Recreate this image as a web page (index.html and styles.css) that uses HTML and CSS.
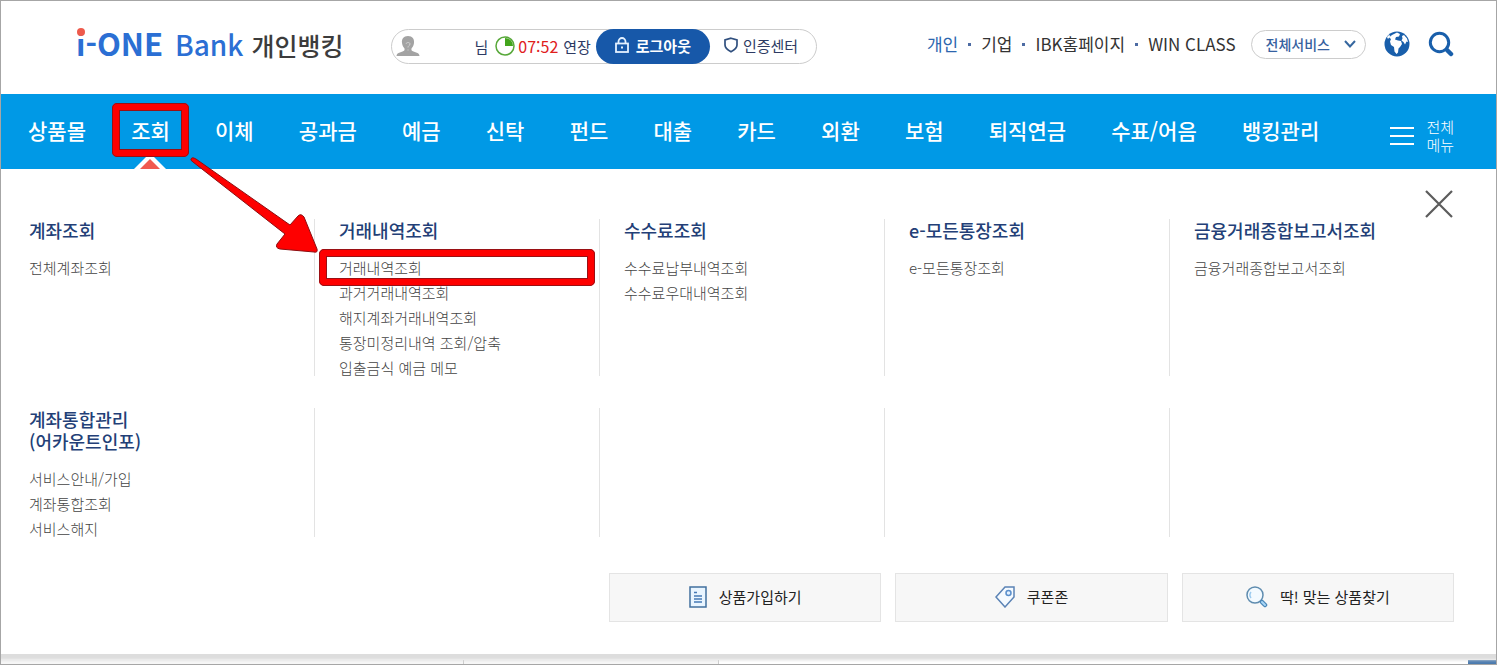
FILE: index.html
```html
<!DOCTYPE html>
<html lang="ko">
<head>
<meta charset="utf-8">
<meta name="viewport" content="width=device-width, initial-scale=1">
<title>i-ONE Bank 개인뱅킹</title>
<link rel="stylesheet" href="styles.css">
</head>
<body>
<div class="page">
  <header class="header">
    <a class="logo" href="#"><span class="logo-one">i-ONE</span><span class="logo-bank">Bank</span><span class="logo-sub">개인뱅킹</span></a>
    <div class="session">
      <svg class="avatar" viewBox="0 0 24 22" width="24" height="22" aria-hidden="true"><path fill="#a3a3a3" d="M12 1c4.500 0 6.500 3 6 7-.4 3-1.600 4.200-2.500 5.500-.4 1.500.3 2.500 2 3l4 1.500c1.300.6 1.800 1.600 2 3H.500c.2-1.400.7-2.400 2-3l4-1.500c1.700-.5 2.400-1.500 2-3C7.600 12.200 6.400 11 6 8c-.5-4 1.500-7 6-7z"/><path fill="none" stroke="#d2d2d2" d="M10 9c.4-2 4-2 4 0 0 1.600-2 1.500-2 3.500m0 2v1"/></svg>
      <span class="user-name">님</span>
      <svg class="timer" viewBox="0 0 20 20" width="20" height="20" aria-hidden="true"><circle cx="10" cy="10" r="9" fill="#fff" stroke="#58a83a" stroke-width="1.500"/><path fill="#43a51d" d="M10 2a8 8 0 0 1 8 8h-8z"/></svg>
      <span class="time">07:52</span>
      <a class="extend" href="#">연장</a>
      <button class="logout" type="button"><svg viewBox="0 0 14 16" width="14" height="16" aria-hidden="true"><g fill="none" stroke="#e4f1ff" stroke-width="1.800"><rect x="1" y="6.500" width="12" height="8.500"/><path d="M3.500 6.500V4.500a3.500 3.500 0 0 1 7 0v2"/></g><path fill="#e4f1ff" d="M6 9.500h2v2H6z"/></svg>로그아웃</button>
      <a class="cert" href="#"><svg viewBox="0 0 14 16" width="14" height="16" aria-hidden="true"><path fill="none" stroke="#31507f" stroke-width="1.700" d="M7 1.200 13 3v5c0 3-2.500 5-6 6.800C3.500 13 1 11 1 8V3z"/></svg>인증센터</a>
    </div>
    <nav class="sites" aria-label="사이트">
      <ul class="site-list">
        <li><a class="current" href="#">개인</a></li>
        <li><a href="#">기업</a></li>
        <li><a href="#">IBK홈페이지</a></li>
        <li><a href="#">WIN CLASS</a></li>
      </ul>
      <button class="services" type="button">전체서비스<svg viewBox="0 0 12 8" width="12" height="8" aria-hidden="true"><path fill="none" stroke="#36679f" stroke-width="2" d="m1 1 5 5.500L11 1"/></svg></button>
      <button class="icon-button" type="button" aria-label="언어"><svg viewBox="0 0 26 26" width="26" height="26" aria-hidden="true"><circle cx="13" cy="13" r="12.500" fill="#195fab"/><path fill="#fff" d="m8 4 5-2.500 3 1.500-1 2.500-3 .5-1 2.500 3 1 3 .5 1 3-2 3-1.500 1.500-.5 4-1.500 1.500-2-2.500-.5-4.500-3-2-1-3.500 1-2.500-2-1.500z"/><path fill="#fff" d="m18 5 2-1 3 3.500 1 3.500-1.500-.5-1.500 3-1.500-2.500-2-1.500 1-2z"/><path fill="#fff" d="m3 6 2-2 1.500 1L4 8z"/></svg></button>
      <button class="icon-button" type="button" aria-label="검색"><svg viewBox="0 0 26 26" width="26" height="26" aria-hidden="true"><circle cx="11.500" cy="11.500" r="9.200" fill="none" stroke="#195fab" stroke-width="3"/><path stroke="#195fab" stroke-width="4.500" stroke-linecap="round" d="m19.500 19.500 3.500 3.500"/></svg></button>
    </nav>
  </header>

  <nav class="gnb" aria-label="주 메뉴">
    <ul class="gnb-list">
      <li><a href="#">상품몰</a></li>
      <li class="active"><a href="#">조회</a>
        <svg class="caret" viewBox="0 0 32 16" width="32" height="16" aria-hidden="true"><path fill="#fff" d="M16 0 32 16H0z"/><path fill="#f05a4f" d="m16 6 10 10H6z"/></svg>
        <span class="mark mark-tab"></span>
        <svg class="arrow" viewBox="0 0 130 98" width="130" height="98" aria-hidden="true"><path fill="#fe0000" stroke="#8c0d10" stroke-linejoin="round" d="M2 3c1-2 3-1 5 0l94 66 8-9q3-3 6 1l13 32q1 4-3 3l-34-3q-5-1-3-5l8-10L4 6Q1 4 2 3z"/></svg>
      </li>
      <li><a href="#">이체</a></li>
      <li><a href="#">공과금</a></li>
      <li><a href="#">예금</a></li>
      <li><a href="#">신탁</a></li>
      <li><a href="#">펀드</a></li>
      <li><a href="#">대출</a></li>
      <li><a href="#">카드</a></li>
      <li><a href="#">외환</a></li>
      <li><a href="#">보험</a></li>
      <li><a href="#">퇴직연금</a></li>
      <li><a href="#">수표/어음</a></li>
      <li><a href="#">뱅킹관리</a></li>
    </ul>
    <button class="all-menu" type="button"><svg viewBox="0 0 24 20" width="24" height="20" aria-hidden="true"><path stroke="#fff" stroke-width="2" d="M0 2h24M0 10h24M0 18h24"/></svg><span>전체<br>메뉴</span></button>
  </nav>

  <section class="mega">
    <button class="close" type="button" aria-label="닫기"><svg viewBox="0 0 28 28" width="28" height="28" aria-hidden="true"><path stroke="#5c5c5c" stroke-width="2.200" d="m1 1 26 26M27 1 1 27"/></svg></button>
    <div class="columns">
      <div class="cell"><h2>계좌조회</h2><ul><li><a href="#">전체계좌조회</a></li></ul></div>
      <div class="cell"><h2>거래내역조회</h2><ul>
        <li class="picked"><a href="#">거래내역조회</a><span class="mark mark-link"></span></li>
        <li><a href="#">과거거래내역조회</a></li>
        <li><a href="#">해지계좌거래내역조회</a></li>
        <li><a href="#">통장미정리내역 조회/압축</a></li>
        <li><a href="#">입출금식 예금 메모</a></li></ul></div>
      <div class="cell"><h2>수수료조회</h2><ul><li><a href="#">수수료납부내역조회</a></li><li><a href="#">수수료우대내역조회</a></li></ul></div>
      <div class="cell"><h2>e-모든통장조회</h2><ul><li><a href="#">e-모든통장조회</a></li></ul></div>
      <div class="cell"><h2>금융거래종합보고서조회</h2><ul><li><a href="#">금융거래종합보고서조회</a></li></ul></div>
      <div class="cell"><h2>계좌통합관리<br>(어카운트인포)</h2><ul><li><a href="#">서비스안내/가입</a></li><li><a href="#">계좌통합조회</a></li><li><a href="#">서비스해지</a></li></ul></div>
      <div class="cell"></div>
      <div class="cell"></div>
      <div class="cell"></div>
      <div class="cell"></div>
    </div>
    <div class="shortcuts">
      <a href="#"><svg viewBox="0 0 18 22" width="18" height="22" aria-hidden="true"><path fill="#e9f5ff" stroke="#42709f" stroke-width="1.500" d="M1 1h16v20H1z"/><path fill="none" stroke="#4579b5" stroke-width="1.500" d="M5 6.500h3M5 10h8M5 13h8M5 16h8"/></svg>상품가입하기</a>
      <a href="#"><svg viewBox="0 0 20 22" width="20" height="22" aria-hidden="true"><path fill="#f5faff" stroke="#5b83b5" stroke-width="1.500" d="M10 1h9v10l-9 10-9-10z"/><circle cx="13.500" cy="7" r="2.500" fill="#e3f1ff" stroke="#5a8fcc" stroke-width="1.500"/></svg>쿠폰존</a>
      <a href="#"><svg viewBox="0 0 22 22" width="22" height="22" aria-hidden="true"><circle cx="9" cy="9" r="8" fill="#f3faff" stroke="#5f8caf" stroke-width="1.500"/><path fill="none" stroke="#9ccbf0" stroke-width="1.500" d="M5 12a5 5 0 0 1 0-6"/><path stroke="#4a87b8" stroke-width="4.500" stroke-linecap="round" d="m16 16 3 3"/><path stroke="#a8d6f7" stroke-width="2" stroke-linecap="round" d="m16 16 3 3"/></svg>딱! 맞는 상품찾기</a>
    </div>
  </section>
  <div class="below"><span class="below-panel"></span><span class="below-panel"></span><span class="below-tab"></span></div>
</div>
</body>
</html>
```

FILE: styles.css
```css
* { box-sizing: border-box; }
body {
  margin: 0;
  font-family: "Noto Sans CJK KR", "Noto Sans", sans-serif;
  color: #333;
  background: #fff;
}
a { color: inherit; text-decoration: none; }
ul { margin: 0; padding: 0; list-style: none; }
button { padding: 0; border: 0; background: none; font: inherit; color: inherit; cursor: pointer; }
svg { flex: none; display: block; }
.page { border: 1px solid #a6a6a6; white-space: nowrap; overflow: hidden; }

.header { display: flex; align-items: center; padding: 0 42px 3px 75px; height: 93px; }
.logo { position: relative; display: flex; align-items: baseline; padding-bottom: 4px; line-height: 40px; font-size: 28px; color: #2b6fd4; }
.logo::before {
  content: "";
  position: absolute;
  left: 1px;
  top: 5px;
  width: 8px;
  height: 8px;
  border-radius: 50%;
  background: #ee5a4c;
}
.logo-one { font-weight: 700; font-size: 31px; }
.logo-bank { margin-left: 12px; font-weight: 500; }
.logo-sub { margin-left: 8px; font-weight: 500; font-size: 25px; color: #3c3c3c; }

.session {
  display: flex;
  align-items: center;
  height: 35px;
  margin-left: 48px;
  border: 1px solid #ccc;
  border-radius: 18px;
  font-size: 15px;
  color: #2d3a63;
}
.avatar { margin-left: 4px; }
.user-name { margin-left: 54px; }
.timer { margin-left: 7px; }
.time { margin-left: 3px; font-size: 16px; color: #e0201c; }
.extend { margin-left: 5px; }
.logout {
  display: flex;
  align-items: center;
  justify-content: center;
  gap: 7px;
  width: 114px;
  height: 35px;
  margin-left: 5px;
  padding-bottom: 2px;
  border-radius: 18px;
  background: #1758a9;
  color: #fff;
  font-weight: 700;
}
.cert { display: flex; align-items: center; gap: 5px; padding: 0 18px 2px 14px; }

.sites { display: flex; align-items: center; margin-left: auto; padding-bottom: 4px; }
.site-list { display: flex; font-size: 17px; line-height: 24px; }
.site-list li + li::before {
  content: "";
  display: inline-block;
  width: 3px;
  height: 3px;
  margin: 0 10px;
  vertical-align: 5px;
  background: #4d6ba3;
}
.current { color: #2c66ae; }
.services {
  display: flex;
  align-items: center;
  gap: 14px;
  height: 29px;
  margin: 0 18px 0 15px;
  padding: 0 9px 0 14px;
  border: 1px solid #ccc;
  border-radius: 15px;
  font-size: 14px;
  font-weight: 500;
  color: #36619f;
}
.icon-button + .icon-button { margin-left: 18px; }

.gnb { position: relative; z-index: 1; display: flex; align-items: center; height: 75px; padding: 0 42px 0 27px; background: #0099e6; color: #fff; }
.gnb-list { display: flex; flex: 1; justify-content: space-between; padding-bottom: 2px; font-size: 21px; font-weight: 500; line-height: 73px; }
.active { position: relative; }
.caret { position: absolute; left: 50%; bottom: -2px; margin-left: -16px; }
.mark { position: absolute; border: 8px solid #fe0000; border-radius: 5px; outline: 1px solid #9a1014; outline-offset: -1px; pointer-events: none; }
.mark::after { content: ""; position: absolute; inset: -1px; border: 1px solid #9a1014; }
.mark-tab { inset: 9px -19px 10px; }
.arrow { position: absolute; left: 58px; top: 62px; }
.all-menu { display: flex; align-items: center; gap: 12px; margin: 8px 0 0 71px; font-size: 15px; line-height: 18px; font-weight: 300; }

.mega { position: relative; padding: 50px 42px 32px 28px; box-shadow: 0 3px 3px 3px #ddd; }
.close { position: absolute; right: 43px; top: 21px; }
.columns { display: grid; grid-template-columns: repeat(5, 1fr); row-gap: 28px; }
.cell { position: relative; }
.cell:not(:nth-child(5n + 1)) { padding-left: 25px; }
.cell:not(:nth-child(5n + 1))::before {
  content: "";
  position: absolute;
  left: 0;
  top: 0;
  bottom: 4px;
  width: 1px;
  background: #e3e3e3;
}
.cell h2 { margin: 0 0 14px; font-size: 18px; font-weight: 500; line-height: 22px; color: #233f77; }
.cell ul { font-size: 15px; font-weight: 300; line-height: 25px; color: #444; }
.picked { position: relative; }
.mark-link { inset: -6px 4px -6px -20px; }

.shortcuts { display: grid; grid-template-columns: repeat(3, 1fr); gap: 14px; width: 59.3%; margin: 32px 0 0 auto; }
.shortcuts a {
  display: flex;
  align-items: center;
  justify-content: center;
  gap: 12px;
  height: 49px;
  padding-bottom: 2px;
  border: 1px solid #e4e4e4;
  background: #f7f7f7;
  font-size: 15px;
  color: #222;
}
.below { display: flex; height: 10px; padding-top: 6px; }
.below-panel { width: 31%; border-right: 1px solid #ccc; background: #f6f6f6; }
.below-panel + .below-panel { width: 17%; }
.below-tab { width: 28px; margin-left: auto; background: #4a7aae; }
```
